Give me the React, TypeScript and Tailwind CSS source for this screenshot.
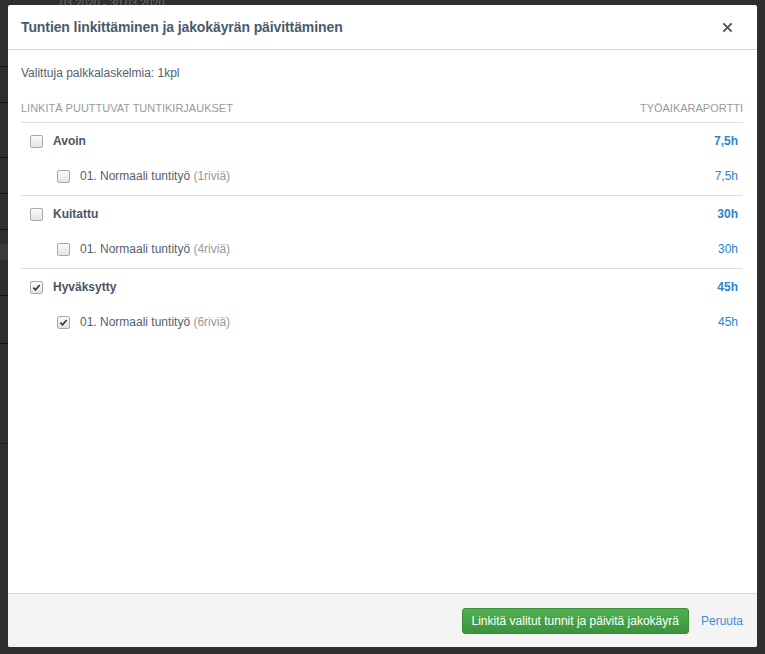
import React, { useState } from 'react';

interface Entry {
  label: string;
  rows: number;
  hours: string;
}

interface Group {
  name: string;
  hours: string;
  checked: boolean;
  entries: Entry[];
}

const groups: Group[] = [
  { name: 'Avoin', hours: '7,5h', checked: false, entries: [{ label: '01. Normaali tuntityö', rows: 1, hours: '7,5h' }] },
  { name: 'Kuitattu', hours: '30h', checked: false, entries: [{ label: '01. Normaali tuntityö', rows: 4, hours: '30h' }] },
  { name: 'Hyväksytty', hours: '45h', checked: true, entries: [{ label: '01. Normaali tuntityö', rows: 6, hours: '45h' }] },
];

const Checkbox: React.FC<{ checked: boolean; onChange: () => void }> = ({ checked, onChange }) => (
  <button
    type="button"
    onClick={onChange}
    className="w-[13px] h-[13px] shrink-0 rounded-[2px] border border-[#a9a9a9] bg-gradient-to-b from-[#fbfbfb] to-[#e4e4e4] flex items-center justify-center"
  >
    {checked && (
      <svg viewBox="0 0 10 10" className="w-[9px] h-[9px]">
        <path d="M1.5 5.2 L3.9 7.6 L8.6 2.2" fill="none" stroke="#333" strokeWidth="1.8" />
      </svg>
    )}
  </button>
);

// the page behind the dimmed backdrop, only a thin strip of it shows
const BackgroundPage = () => (
  <div className="flex flex-col w-[250px] h-full">
    <div className="h-[8px] flex items-start pl-[60px] text-[11px] leading-[6px] text-[#6d6d6d] whitespace-nowrap">03.2020 - 30.03.2020</div>
    <div className="h-[59px] border-b border-[#151515]" />
    <div className="h-[36px] border-b border-[#151515]" />
    <div className="h-[55px] border-b border-[#111]" />
    <div className="h-[36px] border-b border-[#151515]" />
    <div className="h-[36px] border-b border-[#111]" />
    <div className="h-[14px]" />
    <div className="h-[16px] bg-[#3a3b3b]" />
    <div className="h-[36px] border-b border-[#151515]" />
    <div className="h-[48px] border-b border-[#111]" />
    <div className="h-[100px] border-b border-[#222]" />
  </div>
);

export default function App() {
  const [state, setState] = useState(groups.map((g) => ({ group: g.checked, entries: g.entries.map(() => g.checked) })));

  const toggleGroup = (i: number) =>
    setState((s) => s.map((g, idx) => (idx === i ? { group: !g.group, entries: g.entries.map(() => !g.group) } : g)));
  const toggleEntry = (i: number, j: number) =>
    setState((s) => s.map((g, idx) => (idx === i ? { ...g, entries: g.entries.map((e, k) => (k === j ? !e : e)) } : g)));

  return (
    <div className="relative w-[765px] h-[654px] bg-[#2e2f2f] overflow-hidden font-['Liberation_Sans',Arial,sans-serif]">
      <BackgroundPage />

      <div className="absolute left-[8px] top-[5px] w-[749px] h-[642px] bg-white rounded-[2px] flex flex-col overflow-hidden">
        {/* Header */}
        <div className="h-[45px] shrink-0 flex items-center justify-between pl-[13px] pr-[24px] border-b border-[#cbd9e3]">
          <h2 className="text-[14px] font-bold text-[#4a5a6b] tracking-[-0.1px]">Tuntien linkittäminen ja jakokäyrän päivittäminen</h2>
          <button type="button" className="text-[#4b5967]">
            <svg viewBox="0 0 12 12" className="w-[11px] h-[11px]">
              <path d="M1.5 1.5 L10.5 10.5 M10.5 1.5 L1.5 10.5" stroke="currentColor" strokeWidth="2.2" />
            </svg>
          </button>
        </div>

        {/* Body */}
        <div className="flex-1 pl-[13px] pr-[14px] pt-[15px]">
          <div className="text-[12px] leading-[16px] text-[#555f6b]">Valittuja palkkalaskelmia: 1kpl</div>

          <div className="mt-[19px] pb-[6px] border-b border-[#dddddd] flex justify-between text-[11px] leading-[16px] uppercase text-[#9a9a9a]">
            <span>Linkitä puuttuvat tuntikirjaukset</span>
            <span>Työaikaraportti</span>
          </div>

          {groups.map((g, i) => (
            <div key={g.name} className={i > 0 ? 'border-t border-[#dddddd]' : ''}>
              <div className="h-[36px] flex items-center pl-[9px] pr-[5px] text-[12px]">
                <Checkbox checked={state[i].group} onChange={() => toggleGroup(i)} />
                <span className="ml-[10px] font-bold text-[#4b5563]">{g.name}</span>
                <span className="ml-auto font-bold text-[#2b83d3]">{g.hours}</span>
              </div>
              {g.entries.map((e, j) => (
                <div key={j} className="h-[36px] flex items-center pl-[36px] pr-[5px] pb-[2px] text-[12px]">
                  <Checkbox checked={state[i].entries[j]} onChange={() => toggleEntry(i, j)} />
                  <span className="ml-[10px] text-[#555f6b]">
                    {e.label} <span className="text-[#999]">({e.rows}riviä)</span>
                  </span>
                  <span className="ml-auto text-[#2b83d3]">{e.hours}</span>
                </div>
              ))}
            </div>
          ))}
        </div>

        {/* Footer */}
        <div className="h-[54px] shrink-0 border-t border-[#d3dbe1] bg-[#f4f4f4] flex items-center justify-end pr-[14px] gap-[12px]">
          <button
            type="button"
            className="h-[26px] px-[9px] rounded-[3px] border border-[#3a8e3a] bg-gradient-to-b from-[#50b050] to-[#3c933c] text-white text-[12px]"
          >
            Linkitä valitut tunnit ja päivitä jakokäyrä
          </button>
          <a href="#" className="text-[12px] text-[#3b8fdb]">Peruuta</a>
        </div>
      </div>
    </div>
  );
}
